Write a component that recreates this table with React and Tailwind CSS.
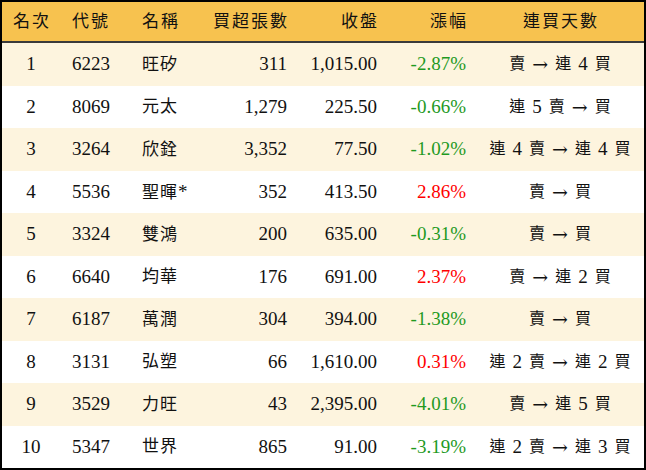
import React from 'react';

const rows = [
  ['1', '6223', '旺矽', '311', '1,015.00', '-2.87%', '賣 → 連 4 買'],
  ['2', '8069', '元太', '1,279', '225.50', '-0.66%', '連 5 賣 → 買'],
  ['3', '3264', '欣銓', '3,352', '77.50', '-1.02%', '連 4 賣 → 連 4 買'],
  ['4', '5536', '聖暉*', '352', '413.50', '2.86%', '賣 → 買'],
  ['5', '3324', '雙鴻', '200', '635.00', '-0.31%', '賣 → 買'],
  ['6', '6640', '均華', '176', '691.00', '2.37%', '賣 → 連 2 買'],
  ['7', '6187', '萬潤', '304', '394.00', '-1.38%', '賣 → 買'],
  ['8', '3131', '弘塑', '66', '1,610.00', '0.31%', '連 2 賣 → 連 2 買'],
  ['9', '3529', '力旺', '43', '2,395.00', '-4.01%', '賣 → 連 5 買'],
  ['10', '5347', '世界', '865', '91.00', '-3.19%', '連 2 賣 → 連 3 買'],
];

const font = { fontFamily: '"Liberation Serif", "Noto Sans CJK TC", serif' };

// 連買天數：中文字較小，數字與箭頭照原大小
function Streak({ text }) {
  return (
    <div className="flex-1 flex items-center justify-center gap-[7px]">
      {text.split(' ').map((t, i) => {
        if (t === '→') return <span key={i} className="text-[19px]" style={{ fontFamily: '"DejaVu Serif", serif' }}>→</span>;
        if (/\d/.test(t)) return <span key={i} className="text-[19px]">{t}</span>;
        return <span key={i} className="text-[16px]">{t}</span>;
      })}
    </div>
  );
}

function Row({ r }) {
  const pct = r[5].startsWith('-') ? 'text-[#1f9a1f]' : 'text-[#ff0000]';
  return (
    <>
      <div className="w-[58px] text-center">{r[0]}</div>
      <div className="w-[72px] pl-[12px]">{r[1]}</div>
      <div className="w-[68px] pl-[10px] whitespace-nowrap text-[17px] tracking-[1px]">
        {r[2].replace('*', '')}
        {r[2].includes('*') && <span className="text-[19px]">*</span>}
      </div>
      <div className="w-[90px] pr-[3px] text-right">{r[3]}</div>
      <div className="w-[90px] pr-[3px] text-right">{r[4]}</div>
      <div className={`w-[96px] pr-[10px] text-right ${pct}`}>{r[5]}</div>
      <Streak text={r[6]} />
    </>
  );
}

export default function App() {
  return (
    <div className="w-[646px] h-[470px] border-2 border-black flex flex-col text-[19px] text-[#111]" style={font}>
      <div className="h-[41px] shrink-0 flex items-center bg-[#f7c24f] border-b-2 border-[#3a3a3a] text-[17px] tracking-[2px]">
        <div className="w-[58px] text-center pl-[2px]">名次</div>
        <div className="w-[72px] pl-[12px]">代號</div>
        <div className="w-[68px] pl-[10px]">名稱</div>
        <div className="w-[90px] pr-[1px] text-right">買超張數</div>
        <div className="w-[90px] pr-[1px] text-right">收盤</div>
        <div className="w-[96px] pr-[8px] text-right">漲幅</div>
        <div className="flex-1 text-center pl-[2px]">連買天數</div>
      </div>
      {rows.map((r, i) => (
        <div key={i} className={`flex-1 flex items-center ${i % 2 === 0 ? 'bg-[#fdf4de]' : 'bg-white'}`}>
          <Row r={r} />
        </div>
      ))}
    </div>
  );
}
